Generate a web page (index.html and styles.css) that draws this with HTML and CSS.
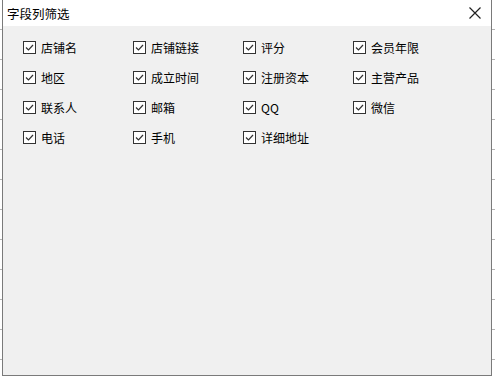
FILE: index.html
```html
<!DOCTYPE html>
<html lang="zh">

<head>
    <meta charset="UTF-8">
    <title>字段列筛选</title>
    <link rel="stylesheet" href="styles.css">
</head>

<body>
    <!-- 对话框 -->
    <div class="dialog">
        <div class="title-bar">
            <span class="title">字段列筛选</span>
            <svg class="close" width="12" height="12" viewBox="0 0 12 12">
                <path d="M0.5 0.5 L11.5 11.5 M11.5 0.5 L0.5 11.5" stroke="#222" stroke-width="1.2" fill="none" />
            </svg>
        </div>
        <div class="field-list">
            <label class="field"><svg class="box" width="13" height="13" viewBox="0 0 13 13"><rect x="0.5" y="0.5" width="12" height="12" fill="#fff" stroke="#333" /><path d="M3 6.5 L5.5 9 L10 4" stroke="#333" stroke-width="1.2" fill="none" /></svg>店铺名</label>
            <label class="field"><svg class="box" width="13" height="13" viewBox="0 0 13 13"><rect x="0.5" y="0.5" width="12" height="12" fill="#fff" stroke="#333" /><path d="M3 6.5 L5.5 9 L10 4" stroke="#333" stroke-width="1.2" fill="none" /></svg>店铺链接</label>
            <label class="field"><svg class="box" width="13" height="13" viewBox="0 0 13 13"><rect x="0.5" y="0.5" width="12" height="12" fill="#fff" stroke="#333" /><path d="M3 6.5 L5.5 9 L10 4" stroke="#333" stroke-width="1.2" fill="none" /></svg>评分</label>
            <label class="field"><svg class="box" width="13" height="13" viewBox="0 0 13 13"><rect x="0.5" y="0.5" width="12" height="12" fill="#fff" stroke="#333" /><path d="M3 6.5 L5.5 9 L10 4" stroke="#333" stroke-width="1.2" fill="none" /></svg>会员年限</label>
            <label class="field"><svg class="box" width="13" height="13" viewBox="0 0 13 13"><rect x="0.5" y="0.5" width="12" height="12" fill="#fff" stroke="#333" /><path d="M3 6.5 L5.5 9 L10 4" stroke="#333" stroke-width="1.2" fill="none" /></svg>地区</label>
            <label class="field"><svg class="box" width="13" height="13" viewBox="0 0 13 13"><rect x="0.5" y="0.5" width="12" height="12" fill="#fff" stroke="#333" /><path d="M3 6.5 L5.5 9 L10 4" stroke="#333" stroke-width="1.2" fill="none" /></svg>成立时间</label>
            <label class="field"><svg class="box" width="13" height="13" viewBox="0 0 13 13"><rect x="0.5" y="0.5" width="12" height="12" fill="#fff" stroke="#333" /><path d="M3 6.5 L5.5 9 L10 4" stroke="#333" stroke-width="1.2" fill="none" /></svg>注册资本</label>
            <label class="field"><svg class="box" width="13" height="13" viewBox="0 0 13 13"><rect x="0.5" y="0.5" width="12" height="12" fill="#fff" stroke="#333" /><path d="M3 6.5 L5.5 9 L10 4" stroke="#333" stroke-width="1.2" fill="none" /></svg>主营产品</label>
            <label class="field"><svg class="box" width="13" height="13" viewBox="0 0 13 13"><rect x="0.5" y="0.5" width="12" height="12" fill="#fff" stroke="#333" /><path d="M3 6.5 L5.5 9 L10 4" stroke="#333" stroke-width="1.2" fill="none" /></svg>联系人</label>
            <label class="field"><svg class="box" width="13" height="13" viewBox="0 0 13 13"><rect x="0.5" y="0.5" width="12" height="12" fill="#fff" stroke="#333" /><path d="M3 6.5 L5.5 9 L10 4" stroke="#333" stroke-width="1.2" fill="none" /></svg>邮箱</label>
            <label class="field"><svg class="box" width="13" height="13" viewBox="0 0 13 13"><rect x="0.5" y="0.5" width="12" height="12" fill="#fff" stroke="#333" /><path d="M3 6.5 L5.5 9 L10 4" stroke="#333" stroke-width="1.2" fill="none" /></svg>QQ</label>
            <label class="field"><svg class="box" width="13" height="13" viewBox="0 0 13 13"><rect x="0.5" y="0.5" width="12" height="12" fill="#fff" stroke="#333" /><path d="M3 6.5 L5.5 9 L10 4" stroke="#333" stroke-width="1.2" fill="none" /></svg>微信</label>
            <label class="field"><svg class="box" width="13" height="13" viewBox="0 0 13 13"><rect x="0.5" y="0.5" width="12" height="12" fill="#fff" stroke="#333" /><path d="M3 6.5 L5.5 9 L10 4" stroke="#333" stroke-width="1.2" fill="none" /></svg>电话</label>
            <label class="field"><svg class="box" width="13" height="13" viewBox="0 0 13 13"><rect x="0.5" y="0.5" width="12" height="12" fill="#fff" stroke="#333" /><path d="M3 6.5 L5.5 9 L10 4" stroke="#333" stroke-width="1.2" fill="none" /></svg>手机</label>
            <label class="field"><svg class="box" width="13" height="13" viewBox="0 0 13 13"><rect x="0.5" y="0.5" width="12" height="12" fill="#fff" stroke="#333" /><path d="M3 6.5 L5.5 9 L10 4" stroke="#333" stroke-width="1.2" fill="none" /></svg>详细地址</label>
        </div>
    </div>
</body>

</html>
```

FILE: styles.css
```css
body {
    margin: 0;
    height: 379px;
    overflow: hidden;
    background-color: #fff;
    background-image: repeating-linear-gradient(to bottom, transparent 0, transparent 29px, #b4b4b4 29px, #b4b4b4 30px);
    font-family: "Noto Sans CJK SC", "Liberation Sans", sans-serif;
    font-size: 12px;
    color: #000;
}

.dialog {
    margin-left: 2px;
    width: 488px;
    height: 375px;
    border: 1px solid #7a7a7a;
    border-top: none;
    background-color: #f0f0f0;
    display: flex;
    flex-direction: column;
}

.title-bar {
    height: 26px;
    background-color: #fff;
    display: flex;
    align-items: center;
    justify-content: space-between;
    padding: 0 10px 0 4px;
}

.title {
    font-size: 12.5px;
}

.close {
    display: block;
}

.field-list {
    display: grid;
    grid-template-columns: repeat(4, 110px);
    grid-auto-rows: 30px;
    padding: 6px 0 0 20px;
}

.field {
    display: flex;
    align-items: center;
    gap: 5px;
}

.box {
    display: block;
}
```
